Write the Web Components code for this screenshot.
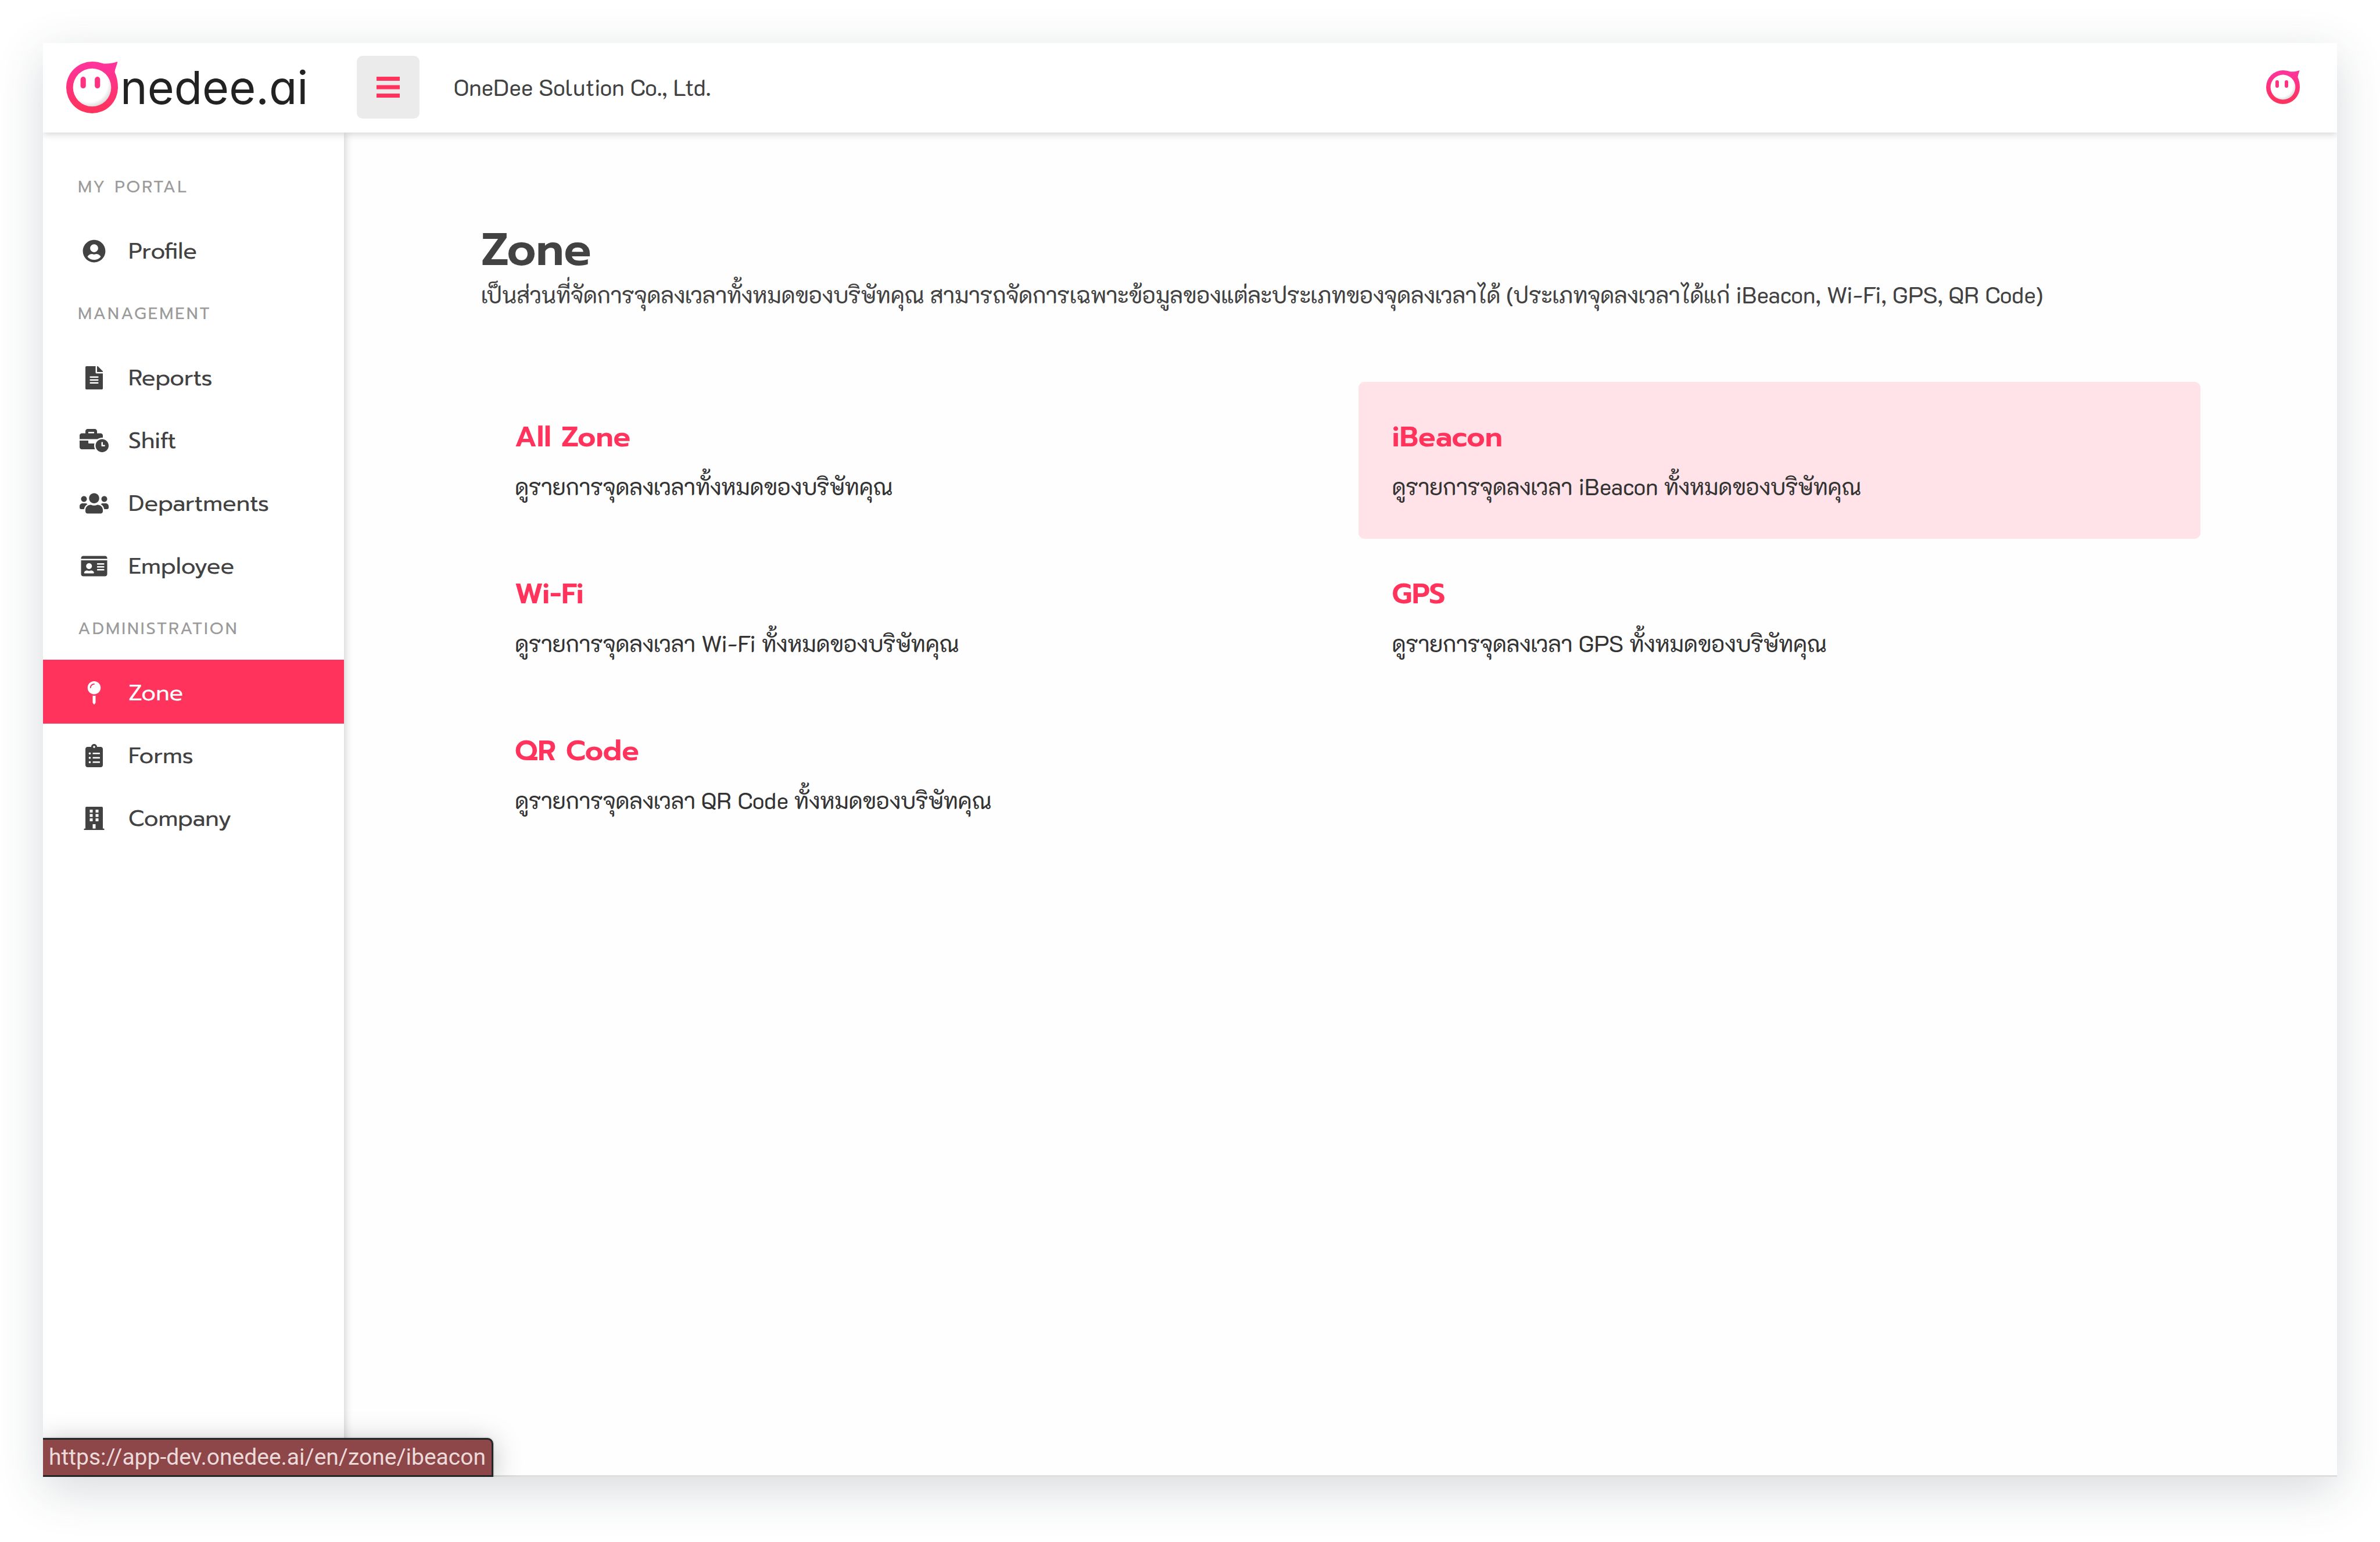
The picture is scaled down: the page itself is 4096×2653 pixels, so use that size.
<!DOCTYPE html>
<html lang="en">
<head>
<meta charset="utf-8">
<meta name="viewport" content="width=device-width, initial-scale=1">
<title>Zone - Onedee.ai</title>
<style>
  :root {
    --brand: #ff335c;
    --brand-soft: #ffe3e8;
    --ink: #424242;
    --ink-strong: #333;
    --muted: #9b9b9b;
    --nav-width: 518px;
    --display: Prompt, Montserrat, "Open Sans", sans-serif;
    --text: K2D, "Bai Jamjuree", "Noto Sans Thai Looped", "Noto Sans", sans-serif;
  }
  html, body { margin: 0; }
  body { background: #fff; color: var(--ink); font-family: var(--text); }
</style>
</head>
<body>
<onedee-app>
  <onedee-topbar slot="top" company="OneDee Solution Co., Ltd."></onedee-topbar>
  <onedee-nav slot="nav">
    <nav-group label="MY PORTAL">
      <nav-item icon="user">Profile</nav-item>
    </nav-group>
    <nav-group label="MANAGEMENT">
      <nav-item icon="report">Reports</nav-item>
      <nav-item icon="shift">Shift</nav-item>
      <nav-item icon="team">Departments</nav-item>
      <nav-item icon="card">Employee</nav-item>
    </nav-group>
    <nav-group label="ADMINISTRATION">
      <nav-item icon="pin" active>Zone</nav-item>
      <nav-item icon="form">Forms</nav-item>
      <nav-item icon="building">Company</nav-item>
    </nav-group>
  </onedee-nav>
  <page-header heading="Zone">เป็นส่วนที่จัดการจุดลงเวลาทั้งหมดของบริษัทคุณ สามารถจัดการเฉพาะข้อมูลของแต่ละประเภทของจุดลงเวลาได้ (ประเภทจุดลงเวลาได้แก่ iBeacon, Wi-Fi, GPS, QR Code)</page-header>
  <zone-grid>
    <zone-card heading="All Zone" path="all">ดูรายการจุดลงเวลาทั้งหมดของบริษัทคุณ</zone-card>
    <zone-card heading="iBeacon" path="ibeacon" current>ดูรายการจุดลงเวลา iBeacon ทั้งหมดของบริษัทคุณ</zone-card>
    <zone-card heading="Wi-Fi" path="wifi">ดูรายการจุดลงเวลา Wi-Fi ทั้งหมดของบริษัทคุณ</zone-card>
    <zone-card heading="GPS" path="gps">ดูรายการจุดลงเวลา GPS ทั้งหมดของบริษัทคุณ</zone-card>
    <zone-card heading="QR Code" path="qrcode">ดูรายการจุดลงเวลา QR Code ทั้งหมดของบริษัทคุณ</zone-card>
  </zone-grid>
  <link-status slot="status">https://app-dev.onedee.ai/en/zone/ibeacon</link-status>
</onedee-app>

<script>
const define = (name, render) => customElements.define(name, class extends HTMLElement {
  constructor() {
    super();
    const template = document.createElement('template');
    template.innerHTML = render(this);
    this.attachShadow({ mode: 'open' }).append(template.content.cloneNode(true));
  }
});

// Sidebar glyphs: [viewBox width, artwork]; every glyph is 512 units tall.
const ICONS = {
  user: [496, '<path d="M248 8C111 8 0 119 0 256s111 248 248 248 248-111 248-248S385 8 248 8zm0 96c48.600 0 88 39.400 88 88s-39.400 88-88 88-88-39.400-88-88 39.400-88 88-88zm0 344c-58.700 0-111.300-26.600-146.500-68.200 18.800-35.400 55.600-59.800 98.500-59.800 2.400 0 4.800.4 7.100 1.100 13 4.200 26.600 6.900 40.900 6.900 14.300 0 28-2.700 40.900-6.900 2.300-.7 4.700-1.100 7.100-1.100 42.900 0 79.700 24.400 98.500 59.800C359.300 421.400 306.700 448 248 448z"/>'],
  report: [384, '<path d="M224 136V0H24C10.700 0 0 10.700 0 24v464c0 13.300 10.700 24 24 24h336c13.300 0 24-10.700 24-24V160H248c-13.200 0-24-10.800-24-24zm64 236c0 6.600-5.400 12-12 12H108c-6.600 0-12-5.400-12-12v-8c0-6.600 5.400-12 12-12h168c6.600 0 12 5.400 12 12v8zm0-64c0 6.600-5.400 12-12 12H108c-6.600 0-12-5.400-12-12v-8c0-6.600 5.400-12 12-12h168c6.600 0 12 5.400 12 12v8zm0-72v8c0 6.600-5.400 12-12 12H108c-6.600 0-12-5.400-12-12v-8c0-6.600 5.400-12 12-12h168c6.600 0 12 5.400 12 12zm96-114.100v6.100H256V0h6.100c6.400 0 12.500 2.500 17 7l97.900 98c4.500 4.500 7 10.600 7 16.900z"/>'],
  shift: [640, '<path d="M496 224c-79.590 0-144 64.410-144 144s64.410 144 144 144 144-64.410 144-144-64.410-144-144-144zm64 150.290c0 5.340-4.370 9.710-9.710 9.710h-60.570c-5.340 0-9.710-4.370-9.710-9.710v-76.570c0-5.340 4.370-9.710 9.710-9.710h12.570c5.340 0 9.710 4.370 9.710 9.710V352h38.290c5.340 0 9.710 4.370 9.710 9.710v12.580zM496 192c5.400 0 10.720.33 16 .81V144c0-25.600-22.400-48-48-48h-80V48c0-25.600-22.400-48-48-48H176c-25.600 0-48 22.400-48 48v48H48c-25.600 0-48 22.400-48 48v80h395.120c28.600-20.090 63.350-32 100.880-32zM320 96H192V64h128v32zm6.820 224H208c-8.840 0-16-7.160-16-16v-48H0v144c0 25.600 22.400 48 48 48h291.430C327.100 423.960 320 396.820 320 368c0-16.660 2.480-32.720 6.820-48z"/>'],
  team: [640, '<path d="M96 224c35.300 0 64-28.700 64-64s-28.700-64-64-64-64 28.700-64 64 28.700 64 64 64zm448 0c35.300 0 64-28.700 64-64s-28.700-64-64-64-64 28.700-64 64 28.700 64 64 64zm32 32h-64c-17.600 0-33.500 7.100-45.100 18.600 40.300 22.100 68.900 62 75.100 109.400h66c17.700 0 32-14.300 32-32v-32c0-35.300-28.700-64-64-64zm-256 0c61.900 0 112-50.100 112-112S381.900 32 320 32 208 82.100 208 144s50.100 112 112 112zm76.800 32h-8.300c-20.800 10-43.900 16-68.500 16s-47.600-6-68.500-16h-8.300C179.600 288 128 339.600 128 403.200V432c0 26.500 21.500 48 48 48h288c26.500 0 48-21.500 48-48v-28.800c0-63.600-51.600-115.200-115.200-115.200zm-223.700-13.400C161.500 263.100 145.600 256 128 256H64c-35.300 0-64 28.700-64 64v32c0 17.700 14.300 32 32 32h65.900c6.300-47.400 34.900-87.300 75.200-109.400z"/>'],
  card: [576, '<path d="M528 32H48C21.500 32 0 53.500 0 80v16h576V80c0-26.500-21.500-48-48-48zM0 432c0 26.500 21.500 48 48 48h480c26.500 0 48-21.500 48-48V128H0v304zm352-232c0-4.400 3.600-8 8-8h144c4.400 0 8 3.600 8 8v16c0 4.400-3.600 8-8 8H360c-4.400 0-8-3.600-8-8v-16zm0 64c0-4.400 3.600-8 8-8h144c4.400 0 8 3.600 8 8v16c0 4.400-3.600 8-8 8H360c-4.400 0-8-3.600-8-8v-16zm0 64c0-4.400 3.600-8 8-8h144c4.400 0 8 3.600 8 8v16c0 4.400-3.600 8-8 8H360c-4.400 0-8-3.600-8-8v-16zM176 192c35.300 0 64 28.700 64 64s-28.700 64-64 64-64-28.700-64-64 28.700-64 64-64zM67.100 396.200C75.500 370.500 99.600 352 128 352h8.200c12.300 5.100 25.700 8 39.800 8s27.600-2.900 39.800-8h8.200c28.400 0 52.500 18.500 60.900 44.200 3.200 9.900-5.200 19.800-15.600 19.800H82.700c-10.400 0-18.800-10-15.600-19.800z"/>'],
  pin: [288, '<path d="M112 316.940v156.690l22.020 33.020c4.750 7.120 15.220 7.120 19.970 0L176 473.630v-156.690c-10.390 1.920-21.060 3.060-32 3.060s-21.610-1.140-32-3.060zM144 0C64.470 0 0 64.470 0 144s64.470 144 144 144 144-64.470 144-144S223.530 0 144 0zm0 76c-37.500 0-68 30.500-68 68 0 6.620-5.380 12-12 12s-12-5.380-12-12c0-50.730 41.280-92 92-92 6.620 0 12 5.380 12 12s-5.380 12-12 12z"/>'],
  form: [384, '<path d="M336 64h-80c0-35.300-28.700-64-64-64s-64 28.700-64 64H48C21.500 64 0 85.500 0 112v352c0 26.500 21.500 48 48 48h288c26.500 0 48-21.500 48-48V112c0-26.500-21.500-48-48-48zM96 424c-13.300 0-24-10.700-24-24s10.700-24 24-24 24 10.700 24 24-10.700 24-24 24zm0-96c-13.300 0-24-10.700-24-24s10.700-24 24-24 24 10.700 24 24-10.700 24-24 24zm0-96c-13.300 0-24-10.700-24-24s10.700-24 24-24 24 10.700 24 24-10.700 24-24 24zm96-192c13.300 0 24 10.700 24 24s-10.700 24-24 24-24-10.700-24-24 10.700-24 24-24zm128 368c0 4.400-3.600 8-8 8H168c-4.400 0-8-3.600-8-8v-16c0-4.400 3.600-8 8-8h144c4.400 0 8 3.600 8 8v16zm0-96c0 4.400-3.600 8-8 8H168c-4.400 0-8-3.600-8-8v-16c0-4.400 3.600-8 8-8h144c4.400 0 8 3.600 8 8v16zm0-96c0 4.400-3.600 8-8 8H168c-4.400 0-8-3.600-8-8v-16c0-4.400 3.600-8 8-8h144c4.400 0 8 3.600 8 8v16z"/>'],
  building: [448, '<path fill-rule="evenodd" d="M436 480h-20V24c0-13.300-10.700-24-24-24H56C42.700 0 32 10.700 32 24v456H12c-6.600 0-12 5.400-12 12v20h448v-20c0-6.600-5.400-12-12-12zM128 64h64v64h-64zM256 64h64v64h-64zM128 160h64v64h-64zM256 160h64v64h-64zM128 256h64v64h-64zM256 256h64v64h-64zM192 480v-96h64v96z"/>']
};

define('onedee-app', () => `
  <style>
    :host { display: flex; box-sizing: border-box; min-height: 100vh; padding: 74px 74px 112px; }
    .window { position: relative; flex: 1; min-width: 0; display: flex; flex-direction: column; overflow: hidden;
      background: #fefefe; box-shadow: 0 22px 76px rgba(40, 58, 70, .19); }
    .body { flex: 1; display: flex; }
    main { flex: 1; min-width: 0; padding: 155px 235px 60px 236px; }
    .edge { height: 3px; background: #dcdedf; }
  </style>
  <div class="window">
    <slot name="top"></slot>
    <div class="body">
      <slot name="nav"></slot>
      <main><slot></slot></main>
    </div>
    <div class="edge"></div>
    <slot name="status"></slot>
  </div>`);

define('onedee-face', () => `
  <style>
    :host { display: block; }
    svg { display: block; width: 100%; height: 100%; }
  </style>
  <svg viewBox="0 0 58 58" aria-hidden="true">
    <defs>
      <linearGradient id="ring" x1="0" y1="0" x2="0" y2="58" gradientUnits="userSpaceOnUse">
        <stop offset="0.1" stop-color="#ff3399"/><stop offset="0.9" stop-color="#ff335f"/>
      </linearGradient>
      <radialGradient id="inside" cx="26" cy="25" r="27" gradientUnits="userSpaceOnUse">
        <stop offset="0.75" stop-color="#fff"/><stop offset="1" stop-color="#d4d4d4"/>
      </radialGradient>
    </defs>
    <circle cx="29" cy="29" r="24" fill="url(#inside)"/>
    <path fill="url(#ring)" fill-rule="evenodd" d="M29 0C34 0 38 1.200 42 2.200C47 2.600 53 1.800 57.500 0C57 4 54.500 8 54.500 12C56.800 17 58 23 58 29A29 29 0 1 1 29 0ZM29 7.600A21.400 21.400 0 1 0 29 50.400A21.400 21.400 0 1 0 29 7.600Z"/>
    <rect x="16" y="17" width="6" height="13" rx="3" fill="#ff3380"/>
    <rect x="32" y="17" width="6" height="13" rx="3" fill="#ff3380"/>
  </svg>`);

define('onedee-topbar', el => `
  <style>
    :host { position: relative; z-index: 2; display: flex; align-items: center; height: 154px; box-sizing: border-box;
      padding: 0 64px 2px 0; background: #fff; box-shadow: 0 3px 12px rgba(0, 0, 0, .17); }
    .brand { display: flex; align-items: center; box-sizing: border-box; width: var(--nav-width); padding-left: 40px;
      gap: 4px; color: #222; text-decoration: none; font: 400 79px/98px Inter, sans-serif;
      font-feature-settings: "cv11"; }
    .brand onedee-face { width: 89px; height: 89px; }
    button { display: flex; align-items: center; justify-content: center; width: 108px; height: 108px; margin: 0 59px 0 22px;
      padding: 0; border: 0; border-radius: 10px; background: #ebebeb; color: var(--brand); }
    button svg { width: 40px; height: 36px; }
    .company { flex: 1; font-size: 39px; line-height: 60px; }
    .account { margin: 0; background: none; width: 58px; height: 58px; border-radius: 50%; }
    .account onedee-face { width: 58px; height: 58px; }
  </style>
  <a class="brand" href="#home" aria-label="Onedee.ai"><onedee-face></onedee-face><span>nedee.ai</span></a>
  <button type="button" aria-label="Toggle menu">
    <svg viewBox="0 0 40 36" fill="currentColor"><rect width="40" height="7"/><rect y="14.500" width="40" height="7"/><rect y="29" width="40" height="7"/></svg>
  </button>
  <span class="company">${el.getAttribute('company')}</span>
  <button type="button" class="account" aria-label="Account"><onedee-face></onedee-face></button>`);

define('onedee-nav', () => `
  <style>
    :host { position: relative; z-index: 1; display: block; box-sizing: border-box; width: var(--nav-width); padding-top: 38px;
      background: #fff; box-shadow: 3px 0 12px rgba(0, 0, 0, .17); }
  </style>
  <nav><slot></slot></nav>`);

define('nav-group', el => `
  <style>
    :host { display: block; }
    h2 { display: flex; align-items: center; height: 110px; margin: 0; padding-left: 60px; color: var(--muted);
      font: 400 29px/44px var(--display); letter-spacing: 3px; }
  </style>
  <h2>${el.getAttribute('label')}</h2>
  <slot></slot>`);

define('nav-item', el => {
  const [width, art] = ICONS[el.getAttribute('icon')];
  return `
  <style>
    :host { display: block; }
    a { display: flex; align-items: center; gap: 34px; box-sizing: border-box; height: 108px; padding: 4px 20px 0 63px;
      color: var(--ink); text-decoration: none; font: 400 39px/60px var(--display); }
    svg { width: 50px; height: 40px; flex: none; }
    :host([active]) a { background: var(--brand); color: #fff; box-shadow: 0 1px var(--brand), 0 -1px var(--brand); }
  </style>
  <a href="#${el.getAttribute('icon')}"${el.hasAttribute('active') ? ' aria-current="page"' : ''}>
    <svg viewBox="0 0 ${width} 512" fill="currentColor" aria-hidden="true">${art}</svg>
    <slot></slot>
  </a>`;
});

define('page-header', el => `
  <style>
    :host { display: block; margin-bottom: 120px; }
    h1 { margin: 0; font: 600 78px/94px var(--display); }
    p { margin: 0; font-size: 39px; line-height: 60px; }
  </style>
  <h1>${el.getAttribute('heading')}</h1>
  <p><slot></slot></p>`);

define('zone-grid', () => `
  <style>
    :host { display: grid; grid-template-columns: repeat(2, minmax(0, 1fr)); column-gap: 60px; }
  </style>
  <slot></slot>`);

define('zone-card', el => `
  <style>
    :host { display: block; }
    a { display: block; padding: 58px 58px 60px; border-radius: 10px; color: var(--ink-strong); text-decoration: none; }
    :host([current]) a { background: var(--brand-soft); }
    h2 { margin: 0 0 18px; color: var(--brand); font: 600 49px/74px var(--display); }
    p { margin: 0; font-size: 39px; line-height: 60px; }
  </style>
  <a href="#${el.getAttribute('path')}">
    <h2>${el.getAttribute('heading')}</h2>
    <p><slot></slot></p>
  </a>`);

define('link-status', () => `
  <style>
    :host { position: absolute; z-index: 3; left: 0; bottom: 0; padding: 0 10px; border: solid #222626; border-width: 3px 3px 3px 0;
      border-radius: 0 10px 0 0; background: #8e4749; color: #ecdadb; font: 400 39px/61px Roboto, sans-serif;
      box-shadow: 0 0 3px rgba(0, 0, 0, .3), 0 6px 48px rgba(0, 0, 0, .25); }
  </style>
  <slot></slot>`);
</script>
</body>
</html>
